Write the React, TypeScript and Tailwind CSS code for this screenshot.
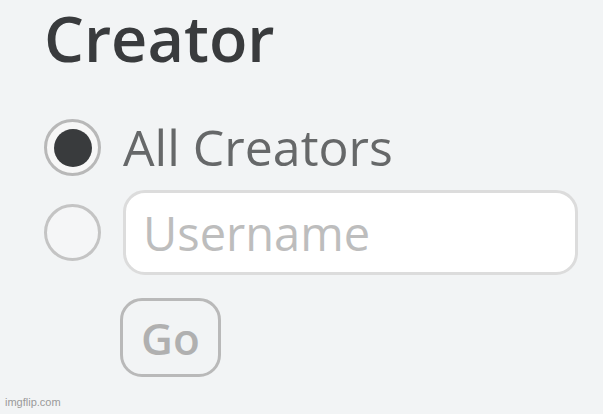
export default function App() {
    return (
        <div className="relative w-[603px] h-[414px] bg-[#f2f4f5] overflow-hidden" style={{ fontFamily: '"Open Sans", "Liberation Sans", sans-serif' }}>
            <div className="pl-[44px] flex flex-col">
                <h2 className="text-[63px] leading-[76px] font-semibold text-[#393b3d]">Creator</h2>
                <div className="mt-[43px] flex items-center gap-[22px]">
                    <span className="w-[57px] h-[57px] rounded-full border-[3px] border-[#b8b8b8] bg-[#f7f7f7] flex items-center justify-center">
                        <span className="w-[38px] h-[38px] rounded-full bg-[#393b3d]" />
                    </span>
                    <span className="text-[50px] leading-[57px] text-[#666869]">All Creators</span>
                </div>
                <div className="mt-[14px] flex items-center gap-[22px]">
                    <span className="w-[57px] h-[57px] rounded-full border-[3px] border-[#c4c4c4] bg-[#f5f6f7]" />
                    <input
                        placeholder="Username"
                        className="w-[455px] h-[85px] rounded-[22px] border-[3px] border-[#dcdcdc] bg-white px-[17px] text-[47px] text-[#393b3d] placeholder:text-[#bdbdbd] outline-none"
                    />
                </div>
                <button className="mt-[23px] ml-[76px] w-[101px] h-[79px] rounded-[22px] border-[3px] border-[#b9b9b9] text-[44px] font-semibold text-[#b0b0b0] flex items-center justify-center">
                    Go
                </button>
            </div>
            <span className="absolute left-[5px] bottom-[4px] text-[11px] text-[#9a9a9a]" style={{ fontFamily: '"Liberation Sans", Arial, sans-serif' }}>imgflip.com</span>
        </div>
    )
}
